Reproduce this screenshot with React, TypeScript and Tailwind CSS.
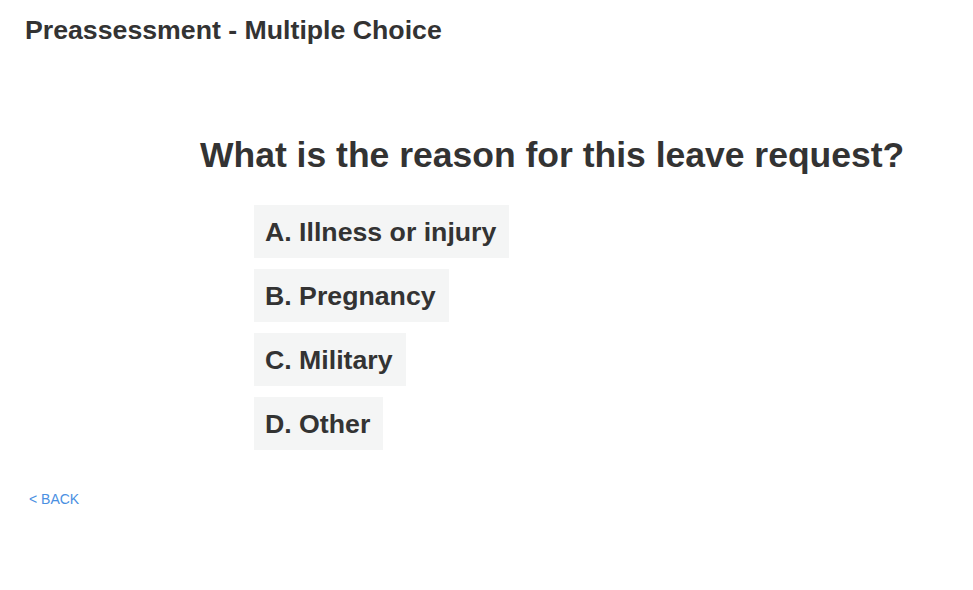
import React from "react";

export default function App() {
  const options = ["A. Illness or injury", "B. Pregnancy", "C. Military", "D. Other"];
  return (
    <div className="w-[973px] h-[590px] bg-white text-[#333333] font-['Liberation_Sans',Arial,sans-serif]">
      <div className="pl-[25px] pt-[15px]">
        <h1 className="text-[26.7px] leading-[30px] font-bold">Preassessment - Multiple Choice</h1>
      </div>
      <div className="pl-[200px] pt-[90px]">
        <h2 className="text-[35.5px] leading-[40px] font-bold">What is the reason for this leave request?</h2>
      </div>
      <div className="pl-[254px] pt-[30px] flex flex-col items-start gap-[11px]">
        {options.map((o) => (
          <div key={o} className="bg-[#f4f5f5] h-[53px] pl-[11px] pr-[13px] pt-[2px] flex items-center text-[26.7px] font-bold">
            {o}
          </div>
        ))}
      </div>
      <div className="pl-[29px] pt-[37px]">
        <a className="text-[14px] leading-[15px] text-[#4a90e2]">&lt; BACK</a>
      </div>
    </div>
  );
}
